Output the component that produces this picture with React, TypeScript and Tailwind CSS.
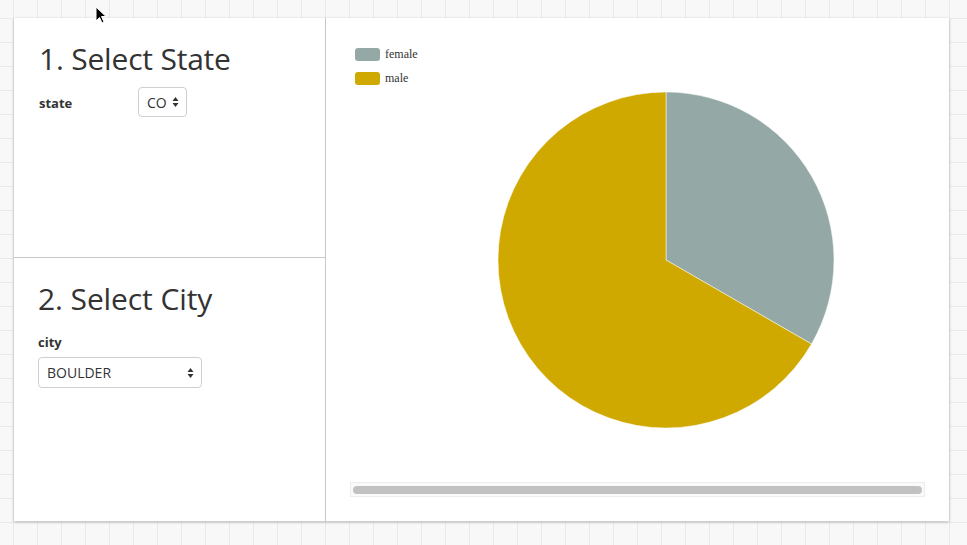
import React from "react";

function Arrows() {
  return (
    <svg width="7" height="12" viewBox="0 0 7 12" className="shrink-0">
      <path d="M3.5 1 L6.5 5 L0.5 5 Z" fill="#333" />
      <path d="M3.5 11 L6.5 7 L0.5 7 Z" fill="#333" />
    </svg>
  );
}

export default function App() {
  const sans = { fontFamily: '"Open Sans", "Noto Sans", sans-serif' };
  return (
    <div
      className="relative w-[967px] h-[545px] overflow-hidden bg-[#f8f8f8] bg-[linear-gradient(to_right,#e9e9e9_1px,transparent_1px),linear-gradient(to_bottom,#e9e9e9_1px,transparent_1px)] bg-[size:24px_24px] bg-[position:13px_18px] pl-[14px] pt-[18px]"
      style={sans}
    >
      <div className="flex w-[935px] h-[503px] bg-white shadow-[0_1px_3px_rgba(0,0,0,0.25)] text-[#333]">
        <div className="flex w-[312px] flex-col border-r border-[#c9c9c9]">
          <div className="h-[240px] border-b border-[#c9c9c9] px-[25px] pt-[24px]">
            <h1 className="text-[30px] leading-[34px] font-normal tracking-[-0.2px]">1. Select State</h1>
            <div className="mt-[11px] flex items-center">
              <span className="w-[99px] text-[13px] font-bold leading-[20px] pt-[1px]">state</span>
              <div className="flex h-[30px] w-[49px] items-center justify-between rounded-[4px] border border-[#cfcfcf] pl-[8px] pr-[7px] text-[14px]">
                <span>CO</span>
                <Arrows />
              </div>
            </div>
          </div>
          <div className="flex-1 px-[24px] pt-[24px]">
            <h1 className="text-[30px] leading-[34px] font-normal tracking-[-0.1px]">2. Select City</h1>
            <div className="mt-[17px] text-[13px] font-bold leading-[18px]">city</div>
            <div className="mt-[6px] flex h-[31px] w-[164px] items-center justify-between rounded-[4px] border border-[#cfcfcf] pl-[8px] pr-[7px] text-[14px]">
              <span>BOULDER</span>
              <Arrows />
            </div>
          </div>
        </div>
        <div className="flex flex-1 flex-col">
          <div
            className="flex flex-col gap-[11px] pl-[29px] pt-[30px] text-[12px] leading-[13px] text-[#333]"
            style={{ fontFamily: '"Liberation Serif", serif' }}
          >
            <div className="flex items-center gap-[5px]">
              <span className="h-[13px] w-[25px] rounded-[3px] bg-[#94a9a5]" />
              <span>female</span>
            </div>
            <div className="flex items-center gap-[5px]">
              <span className="h-[13px] w-[25px] rounded-[3px] bg-[#cfa800]" />
              <span>male</span>
            </div>
          </div>
          <svg width="340" height="340" viewBox="0 0 340 340" className="ml-[170px] mt-[5px]">
            <path d="M170 170 L170 2 A168 168 0 0 1 315.49 254 Z" fill="#94a9a5" stroke="#fff" strokeWidth="0.5" />
            <path d="M170 170 L315.49 254 A168 168 0 1 1 170 2 Z" fill="#cfa800" stroke="#fff" strokeWidth="0.5" />
          </svg>
          <div className="ml-[24px] mt-[52px] h-[15px] w-[575px] border border-[#ededed] bg-[#fafafa] px-[2px] py-[3px]">
            <div className="h-[8px] w-full rounded-full bg-[#c1c1c1]" />
          </div>
        </div>
      </div>
      <svg className="absolute left-[95px] top-[6px]" width="12" height="19" viewBox="0 0 12 19">
        <path d="M1 1 L1 15 L4.5 11.5 L7 17 L9 16 L6.5 10.5 L11 10.5 Z" fill="#000" stroke="#fff" strokeWidth="1" />
      </svg>
    </div>
  );
}
